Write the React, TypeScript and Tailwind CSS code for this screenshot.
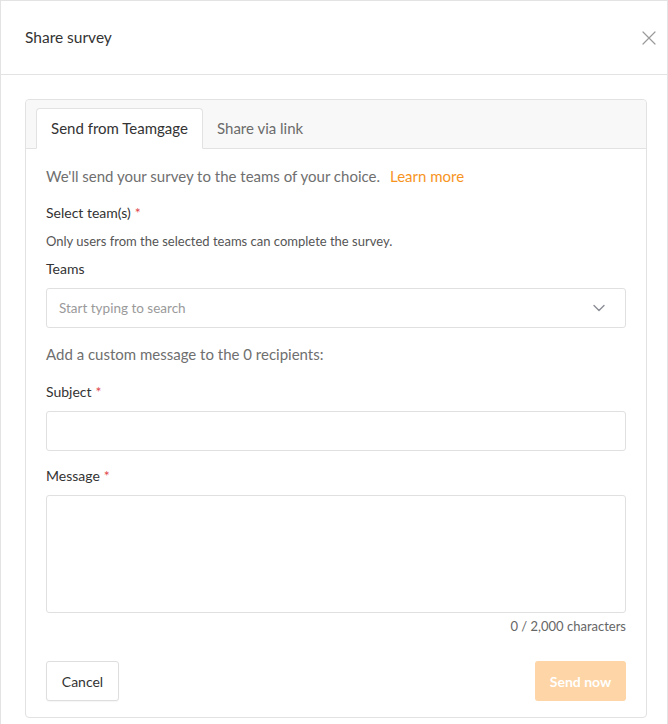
import { useState } from "react";

const FONT = "font-['Lato','Liberation_Sans',sans-serif]";

function Required() {
  return <span className="ml-1 text-[#e0474c]">*</span>;
}

function CloseIcon() {
  return (
    <svg width="14" height="14" viewBox="0 0 14 14" fill="none">
      <path d="M1 1L13 13M13 1L1 13" stroke="#9a9a9a" strokeWidth="1.2" strokeLinecap="round" />
    </svg>
  );
}

function ChevronDown() {
  return (
    <svg width="12" height="8" viewBox="0 0 12 8" fill="none">
      <path d="M1 1.5L6 6.5L11 1.5" stroke="#8a8d96" strokeWidth="1.4" strokeLinecap="round" strokeLinejoin="round" />
    </svg>
  );
}

export default function App() {
  const [tab, setTab] = useState<"teamgage" | "link">("teamgage");
  const [subject, setSubject] = useState("");
  const [message, setMessage] = useState("");

  return (
    <div className={`${FONT} h-[724px] w-[668px] overflow-hidden bg-white text-[#333]`}>
      <div className="border border-[#e3e3e3] min-h-[740px]">
        {/* header */}
        <div className="flex h-[74px] items-center justify-between border-b border-[#e3e3e3] pl-6 pr-[7px]">
          <h2 className="text-[15.5px] text-[#333]">Share survey</h2>
          <button type="button" className="p-1">
            <CloseIcon />
          </button>
        </div>

        {/* body */}
        <div className="pl-6 pr-5 pt-6">
          <div className="rounded-[4px] border border-[#e2e2e2]">
            {/* tabs */}
            <div className="flex h-[49px] items-end rounded-t-[4px] border-b border-[#e2e2e2] bg-[#f8f8f8] pl-[10px]">
              <button
                type="button"
                onClick={() => setTab("teamgage")}
                className={`-mb-px h-[41px] w-[167px] rounded-t-[4px] border text-[15px] ${
                  tab === "teamgage"
                    ? "border-[#e2e2e2] border-b-white bg-white text-[#333]"
                    : "border-transparent text-[#6b6b6b]"
                }`}
              >
                Send from Teamgage
              </button>
              <button
                type="button"
                onClick={() => setTab("link")}
                className={`-mb-px h-[41px] rounded-t-[4px] border px-[13px] text-[15px] ${
                  tab === "link"
                    ? "border-[#e2e2e2] border-b-white bg-white text-[#333]"
                    : "border-transparent text-[#6b6b6b]"
                }`}
              >
                Share via link
              </button>
            </div>

            {/* form */}
            <div className="px-5 pb-4 pt-[15px]">
              <p className="text-[15px] leading-6 text-[#6f6f6f]">
                We'll send your survey to the teams of your choice.
                <a href="#" className="ml-2.5 text-[#f7941d]">
                  Learn more
                </a>
              </p>

              <div className="mt-[15px] text-[14px] leading-5">
                Select team(s)
                <Required />
              </div>
              <p className="mt-[9px] text-[13px] leading-[18px] text-[#555]">
                Only users from the selected teams can complete the survey.
              </p>

              <div className="mt-[9px] text-[14px] leading-5">Teams</div>
              <div className="mt-[9px] flex h-10 items-center justify-between rounded-[3px] border border-[#e0e0e0] pl-3 pr-5">
                <span className="text-[13.5px] text-[#9a9a9a]">Start typing to search</span>
                <ChevronDown />
              </div>

              <p className="mt-[14px] text-[15px] leading-6 text-[#6f6f6f]">
                Add a custom message to the 0 recipients:
              </p>

              <div className="mt-4 text-[14px] leading-5">
                Subject
                <Required />
              </div>
              <input
                value={subject}
                onChange={(e) => setSubject(e.target.value)}
                className="mt-[9px] block h-10 w-full rounded-[3px] border border-[#e0e0e0] px-3 text-[14px] outline-none"
              />

              <div className="mt-[15px] text-[14px] leading-5">
                Message
                <Required />
              </div>
              <textarea
                value={message}
                onChange={(e) => setMessage(e.target.value)}
                className="mt-[9px] block h-[118px] w-full resize-none rounded-[3px] border border-[#e0e0e0] px-3 py-2 text-[14px] outline-none"
              />
              <div className="mt-1 text-right text-[13px] leading-[18px] text-[#666]">
                {message.length} / 2,000 characters
              </div>

              <div className="mt-[26px] flex items-center justify-between">
                <button
                  type="button"
                  className="h-10 w-[73px] rounded-[3px] border border-[#dedede] bg-white text-[14px] text-[#333] shadow-[0_1px_1px_rgba(0,0,0,0.04)]"
                >
                  Cancel
                </button>
                <button
                  type="button"
                  disabled
                  className="h-10 w-[91px] rounded-[3px] bg-[#fdd5a6] text-[14px] font-bold text-white"
                >
                  Send now
                </button>
              </div>
            </div>
          </div>
        </div>
      </div>
    </div>
  );
}
